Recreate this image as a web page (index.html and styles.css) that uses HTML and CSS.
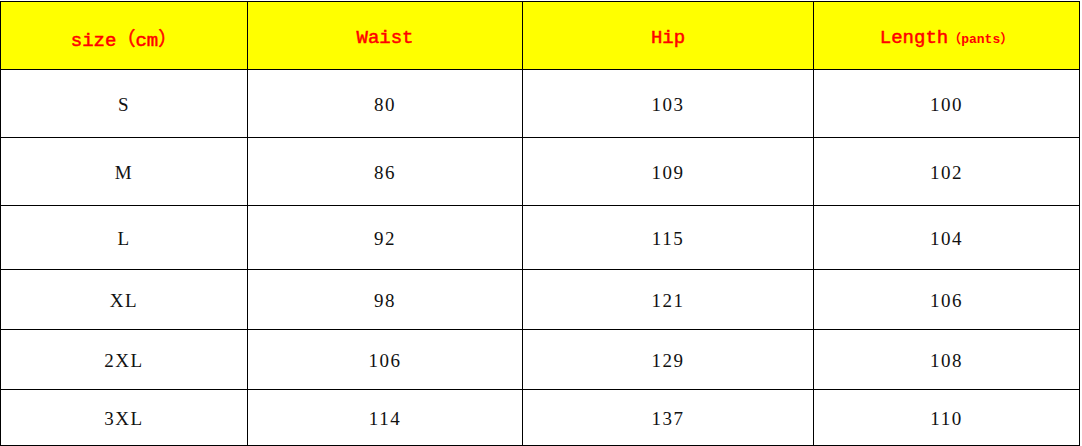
FILE: index.html
```html
<!DOCTYPE html>
<html>
<head>
<meta charset="utf-8">
<link rel="stylesheet" href="styles.css">
</head>
<body>
<table class="size-table">
  <colgroup>
    <col class="c1"><col class="c2"><col class="c3"><col class="c4">
  </colgroup>
  <thead>
    <tr class="r-head">
      <th>size（cm）</th>
      <th>Waist</th>
      <th>Hip</th>
      <th>Length<span class="small">（pants）</span></th>
    </tr>
  </thead>
  <tbody>
    <tr class="r68"><td>S</td><td>80</td><td>103</td><td>100</td></tr>
    <tr class="r68"><td>M</td><td>86</td><td>109</td><td>102</td></tr>
    <tr class="r64"><td>L</td><td>92</td><td>115</td><td>104</td></tr>
    <tr class="r60"><td>XL</td><td>98</td><td>121</td><td>106</td></tr>
    <tr class="r60"><td>2XL</td><td>106</td><td>129</td><td>108</td></tr>
    <tr class="r56"><td>3XL</td><td>114</td><td>137</td><td>110</td></tr>
  </tbody>
</table>
</body>
</html>
```

FILE: styles.css
```css
html, body {
  margin: 0;
  padding: 0;
  background: #fff;
}
body {
  padding-top: 1px;
}
.size-table {
  border-collapse: collapse;
  table-layout: fixed;
  width: 1079px;
}
.c1 { width: 247px; }
.c2 { width: 275px; }
.c3 { width: 291px; }
.c4 { width: 266px; }
.size-table th,
.size-table td {
  border: 1px solid #000;
  padding: 3px 0 0 0;
  text-align: center;
  vertical-align: middle;
}
.size-table th {
  background: #ffff00;
  color: #f00;
  font-family: "Liberation Mono", "Noto Sans CJK SC", monospace;
  font-size: 19px;
  font-weight: normal;
  -webkit-text-stroke: 0.5px #f00;
  padding-top: 4px;
}
.size-table th .small {
  font-size: 13px;
  font-weight: bold;
  -webkit-text-stroke: 0;
}
.size-table td {
  font-family: "Liberation Serif", "Noto Sans CJK SC", serif;
  font-size: 19px;
  color: #111;
  letter-spacing: 1.5px;
}
.r-head { height: 68px; }
.r68 { height: 68px; }
.r64 { height: 64px; }
.r60 { height: 60px; }
.r56 { height: 56px; }
```
